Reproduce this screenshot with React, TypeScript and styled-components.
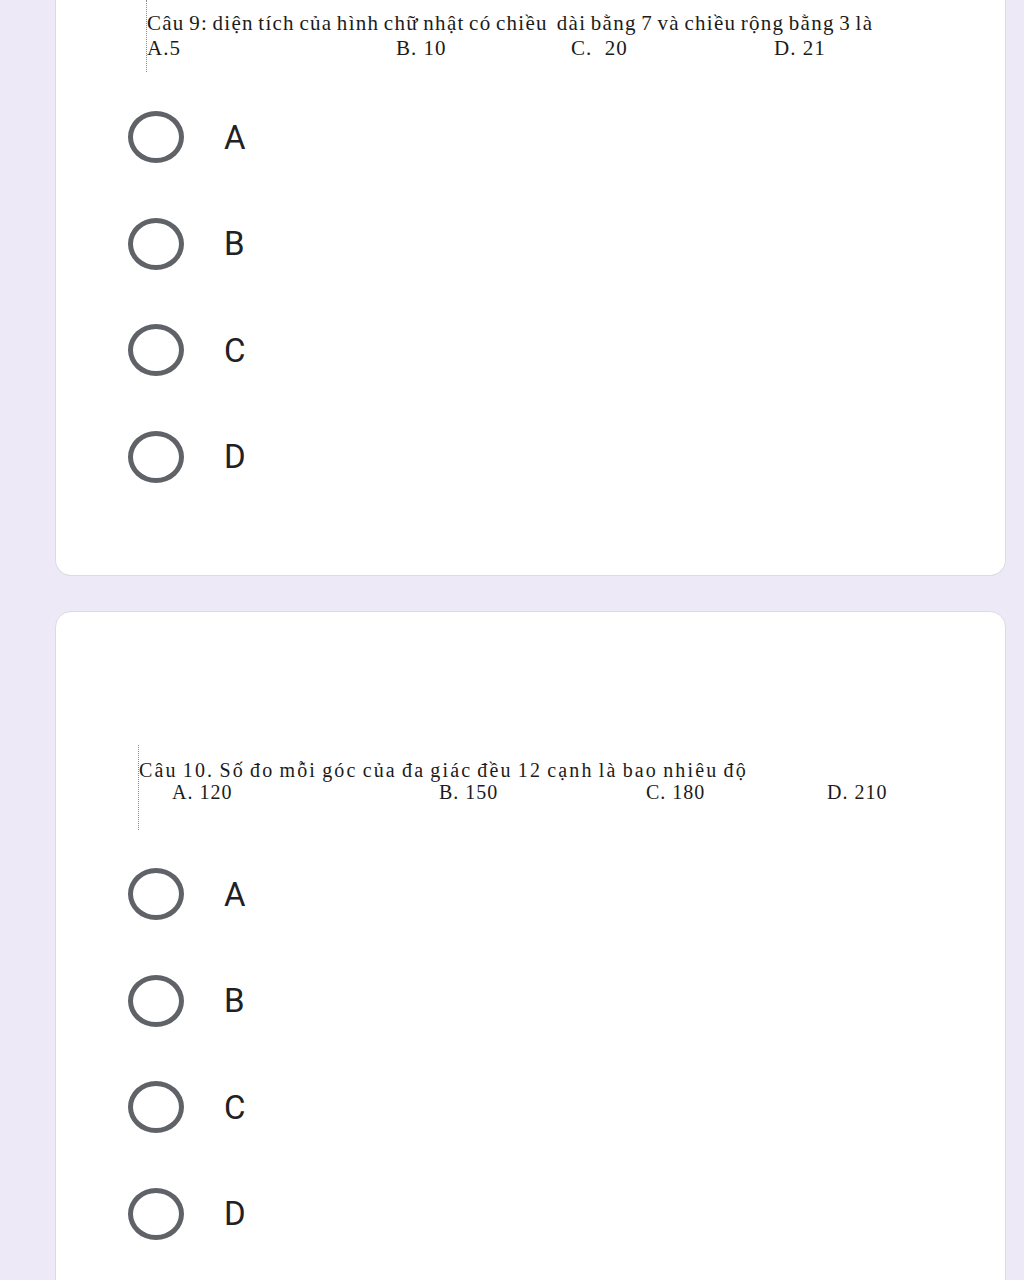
import styled, { createGlobalStyle } from 'styled-components'

const GlobalStyle = createGlobalStyle`
  body {
    margin: 0;
    background: #ede9f7;
    font-family: Roboto, 'Liberation Sans', Arial, sans-serif;
  }
`

const Page = styled.div`
  display: flex;
  flex-direction: column;
  gap: 35px;
  padding: 0 18px 0 55px;
  height: 1280px;
  overflow: hidden;
`

const Card = styled.section<{ cut?: boolean; top: number; bottom: number }>`
  width: 951px;
  box-sizing: border-box;
  background: #fff;
  border: 1px solid #dadce0;
  border-top: ${({ cut }) => (cut ? 'none' : '1px solid #dadce0')};
  border-radius: ${({ cut }) => (cut ? '0 0 16px 16px' : '16px')};
  padding: ${({ top, bottom }) => `${top}px 0 ${bottom}px`};
  flex-shrink: 0;
`

const Figure = styled.div<{ left: number; height: number; size: number; lineGap: number }>`
  margin-left: ${({ left }) => left}px;
  height: ${({ height }) => height}px;
  border-left: 1px dotted #8a8a8a;
  box-sizing: border-box;
  font-family: 'Liberation Serif', 'Times New Roman', serif;
  font-size: ${({ size }) => size}px;
  line-height: ${({ lineGap }) => lineGap}px;
  color: #1b1b1b;
  white-space: nowrap;
`

const Stem = styled.div<{ spacing: number; pad: number }>`
  padding-top: ${({ pad }) => pad}px;
  letter-spacing: ${({ spacing }) => spacing}px;
  word-spacing: -2px;
`

const ChoiceRow = styled.div<{ cols: string; indent: number }>`
  display: grid;
  grid-template-columns: ${({ cols }) => cols};
  padding-left: ${({ indent }) => indent}px;
  letter-spacing: 1px;
`

const Options = styled.div<{ gap: number }>`
  display: flex;
  flex-direction: column;
  margin-top: ${({ gap }) => gap}px;
`

const Option = styled.label`
  display: flex;
  align-items: center;
  height: 106.5px;
  padding-left: 72px;
  gap: 40px;
`

const Radio = styled.span`
  width: 56px;
  height: 52px;
  box-sizing: border-box;
  border: 5px solid #5f6368;
  border-radius: 50%;
  flex-shrink: 0;
`

const Label = styled.span`
  font-size: 33px;
  color: #202124;
`

const letters = ['A', 'B', 'C', 'D']

const OptionList = ({ gap }: { gap: number }) => (
  <Options gap={gap}>
    {letters.map((l) => (
      <Option key={l}>
        <Radio />
        <Label>{l}</Label>
      </Option>
    ))}
  </Options>
)

const App = () => (
  <>
    <GlobalStyle />
    <Page>
      <Card cut top={0} bottom={65}>
        <Figure left={90} height={72} size={21} lineGap={25}>
          <Stem spacing={1.27} pad={11}>
            Câu 9: diện tích của hình chữ nhật có chiều&nbsp; dài bằng 7 và chiều rộng bằng 3 là
          </Stem>
          <ChoiceRow cols='249px 175px 203px auto' indent={0}>
            <span>A.5</span>
            <span>B. 10</span>
            <span>C.&nbsp; 20</span>
            <span>D. 21</span>
          </ChoiceRow>
        </Figure>
        <OptionList gap={12} />
      </Card>
      <Card top={133} bottom={60}>
        <Figure left={82} height={85} size={20} lineGap={22}>
          <Stem spacing={2.15} pad={14}>
            Câu 10. Số đo mỗi góc của đa giác đều 12 cạnh là bao nhiêu độ
          </Stem>
          <ChoiceRow cols='267px 207px 181px auto' indent={33}>
            <span>A. 120</span>
            <span>B. 150</span>
            <span>C. 180</span>
            <span>D. 210</span>
          </ChoiceRow>
        </Figure>
        <OptionList gap={11} />
      </Card>
    </Page>
  </>
)

export default App
